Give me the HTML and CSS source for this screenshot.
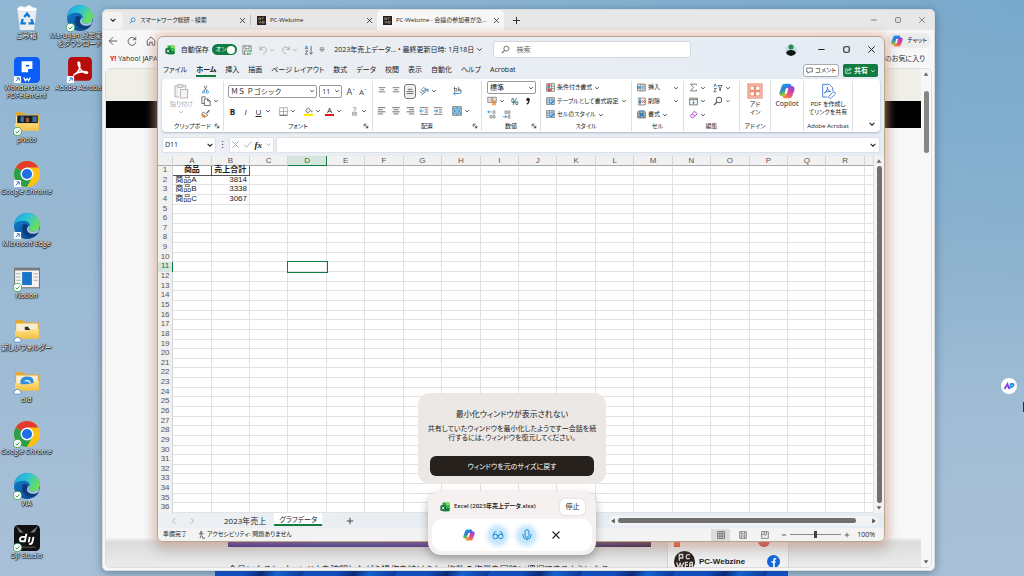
FILE: index.html
```html
<!DOCTYPE html>
<html lang="ja">
<head>
<meta charset="utf-8">
<title>デスクトップ</title>
<link rel="stylesheet" href="styles.css">
</head>
<body>
<svg class="defs" aria-hidden="true">
  <defs>
    <linearGradient id="g-edge-a" x1="0" y1="0" x2="1" y2="0.5"><stop offset="0" stop-color="#1ba3e4"/><stop offset=".5" stop-color="#2fc3d6"/><stop offset="1" stop-color="#6be05a"/></linearGradient>
    <linearGradient id="g-edge-b" x1="0" y1="0" x2="0.6" y2="1"><stop offset="0" stop-color="#1689d8"/><stop offset="1" stop-color="#0b4a93"/></linearGradient>
    <linearGradient id="g-cop-a" x1="0" y1="0" x2="0.4" y2="1"><stop offset="0" stop-color="#16a6e8"/><stop offset=".5" stop-color="#2f7de0"/><stop offset=".75" stop-color="#53b95c"/><stop offset="1" stop-color="#f2c11e"/></linearGradient>
    <linearGradient id="g-cop-b" x1="0.6" y1="0" x2="0.3" y2="1"><stop offset="0" stop-color="#8a48e0"/><stop offset=".5" stop-color="#e0459a"/><stop offset="1" stop-color="#f58a35"/></linearGradient>
    <linearGradient id="g-folder" x1="0" y1="0" x2="0" y2="1"><stop offset="0" stop-color="#ffe08a"/><stop offset="1" stop-color="#f5c142"/></linearGradient>
  </defs>
  <symbol id="down" viewBox="0 0 10 10"><path d="M2 3.5l3 3 3-3" fill="none" stroke="currentColor" stroke-width="1.3"/></symbol>
  <symbol id="left" viewBox="0 0 10 10"><path d="M6.5 1.5L3 5l3.500 3.500" fill="none" stroke="currentColor"/></symbol>
  <symbol id="right" viewBox="0 0 10 10"><path d="M3.500 1.500L7 5 3.500 8.500" fill="none" stroke="currentColor"/></symbol>
  <symbol id="x" viewBox="0 0 10 10"><path d="M1.500 1.500l7 7m0-7l-7 7" fill="none" stroke="currentColor" stroke-width="1.100"/></symbol>
  <symbol id="plus" viewBox="0 0 10 10"><path d="M5 1v8M1 5h8" fill="none" stroke="currentColor"/></symbol>
  <symbol id="minus" viewBox="0 0 10 10"><path d="M1.500 5h7" fill="none" stroke="currentColor" stroke-width="1.200"/></symbol>
  <symbol id="box" viewBox="0 0 10 10"><rect x="2" y="2" width="6" height="6" rx="1" fill="none" stroke="currentColor" stroke-width="1.200"/></symbol>
  <symbol id="launch" viewBox="0 0 10 10"><path d="M2 6V2h4M4 4l4 4M8 4.500V8H4.500" fill="none" stroke="currentColor" stroke-width="1.200"/></symbol>
  <symbol id="lens" viewBox="0 0 10 10"><circle cx="6" cy="4" r="2.800" fill="none" stroke="currentColor" stroke-width="1"/><path d="M4 6L1 9" stroke="currentColor" stroke-width="1.200"/></symbol>
  <symbol id="tri-up" viewBox="0 0 10 10"><path d="M5 2l4 6H1z" fill="currentColor"/></symbol>
  <symbol id="tri-down" viewBox="0 0 10 10"><path d="M5 8l4-6H1z" fill="currentColor"/></symbol>
  <symbol id="tri-left" viewBox="0 0 10 10"><path d="M2 5l6-4v8z" fill="currentColor"/></symbol>
  <symbol id="tri-right" viewBox="0 0 10 10"><path d="M8 5L2 1v8z" fill="currentColor"/></symbol>
  <symbol id="edge" viewBox="0 0 24 24"><circle cx="12" cy="12" r="12" fill="url(#g-edge-b)"/><path d="M.3 10.500C1.500 3.500 7 0 12.500 0 19 0 24 5 24 10.500c0 4-3 6.500-6.500 6.500-2.500 0-4-1-4-2 0-.7 1.200-1.300 1.200-3.200 0-2.300-2.200-4.600-6-4.600-3.700 0-6.700 1-8.400 3.300z" fill="url(#g-edge-a)"/><path d="M8 11c-2 6 2 11 8 11 3 0 5.500-1.500 7-4-4 2.500-9.500 1.500-10.500-2.500-.5-2 .5-3 .5-3.500C12 10 9 9.500 8 11z" fill="#0d3c7d"/><path d="M14.700 11.500c0 2-1.200 2.600-1.200 3.500 0 1 1.500 2 4 2 2.600 0 5-1.300 6-3.500-.2 1.700-.6 3.200-1.500 4.500-3 2.200-9.500 1.500-10-2.500 0-2 1-3.500 2.700-4z" fill="#a8c6de"/></symbol>
  <symbol id="chrome" viewBox="0 0 24 24"><circle cx="12" cy="12" r="12" fill="#fbc116"/><path d="M12 12L1.600 6A12 12 0 0 1 22.400 6z" fill="#e33b2e"/><path d="M12 12L1.600 6A12 12 0 0 0 12 24l5-9z" fill="#2b9e48"/><path d="M12 6h10.400A12 12 0 0 1 12 24l5.200-9z" fill="#fbc116"/><circle cx="12" cy="12" r="6" fill="#fff"/><circle cx="12" cy="12" r="4.700" fill="#1f6fe5"/></symbol>
  <symbol id="folder" viewBox="0 0 24 24"><path d="M1 4q0-1 1-1h6l2 2h12q1 0 1 1v13H1z" fill="#e9a825"/><rect x="2" y="6" width="20" height="9" fill="#f6edd2"/><path d="M1 13h10l2-2h10v8q0 1-1 1H2q-1 0-1-1z" fill="url(#g-folder)"/></symbol>
  <symbol id="sync" viewBox="0 0 10 10"><circle cx="5" cy="5" r="4.500" fill="#fff" stroke="#35a04a" stroke-width=".9"/><path d="M2.800 5.200l1.600 1.500L7.300 3.600" fill="none" stroke="#2a9440" stroke-width="1.100"/></symbol>
  <symbol id="short" viewBox="0 0 10 10"><rect x="1" y="1" width="8" height="8" rx="1" fill="#fff"/><path d="M3 7l3.500-3.500M4 3.200h3v3" fill="none" stroke="#1668c4"/></symbol>
  <symbol id="cloud" viewBox="0 0 12 10"><path d="M3 8.500a2.300 2.300 0 0 1 0-4.500 3.200 3.200 0 0 1 6 0 2.300 2.300 0 0 1 .2 4.500z" fill="#fff" stroke="#2a7fc4"/></symbol>
  <symbol id="copilot" viewBox="0 0 24 24"><path d="M9 1h6.500c2 0 2.600 1.400 3.200 3l.6 2h-3.500c-1.700 0-2.300 1.200-2.700 2.600L11 16c-.7 2.400-1.500 3.500-4 3.500H4.500C1 19.500 0 17 1 13.500L4 5c1-3 2.500-4 5-4z" fill="url(#g-cop-a)"/><path d="M15 23H8.500c-2 0-2.600-1.400-3.200-3l-.3-1h3.200c1.700 0 2.300-1.200 2.700-2.600L13 8.500C13.700 6.100 14.500 5 17 5h2.500c3.500 0 4.500 2.500 3.500 6l-3 8c-1 3-2.500 4-5 4z" fill="url(#g-cop-b)"/><path d="M10.500 8H14l-2.200 8H8.500z" fill="#fff"/></symbol>
  <symbol id="excel" viewBox="0 0 24 24"><rect x="6" y="1" width="17" height="21" rx="2" fill="#27a844"/><path d="M14 1h7q2 0 2 2v5h-9z" fill="#8edb57"/><path d="M14 8h9v7h-9z" fill="#35bd4b"/><path d="M6 15h17v5q0 2-2 2H8q-2 0-2-2z" fill="#138038"/><rect x="1" y="8" width="13" height="13" rx="2" fill="#0b6a3a"/><path d="M4.500 11l6 7m0-7l-6 7" stroke="#fff" stroke-width="2"/></symbol>
  <symbol id="site" viewBox="0 0 10 10"><rect width="10" height="10" fill="#26201d"/><path d="M2 4V2h2v2H2m4 0V2h2M2 6l1 2 1-2 1 2M6 6h2v2H6z" fill="none" stroke="#b9aca0" stroke-width=".7"/></symbol>
  <symbol id="lines" viewBox="0 0 12 12"><path d="M2 2h8M3.500 4.500h5M2 7h8" fill="none" stroke="#666"/></symbol>
  <symbol id="lines-b" viewBox="0 0 12 12"><path d="M3.500 4h5M2 6.500h8M2 9h8" fill="none" stroke="#555"/></symbol>
  <symbol id="al-l" viewBox="0 0 12 12"><path d="M1 2h9M1 4.500h6M1 7h9M1 9.500h6" fill="none" stroke="#555"/></symbol>
  <symbol id="al-c" viewBox="0 0 12 12"><path d="M1.500 2h9M3 4.500h6M1.500 7h9M3 9.500h6" fill="none" stroke="#555"/></symbol>
  <symbol id="al-r" viewBox="0 0 12 12"><path d="M2 2h9M5 4.500h6M2 7h9M5 9.500h6" fill="none" stroke="#555"/></symbol>
  <symbol id="ind" viewBox="0 0 12 12"><path d="M1 2h10M7 4.700h4M7 7.300h4M1 10h10" fill="none" stroke="#666"/><path d="M5.500 6H1m2-2L1 6l2 2" fill="none" stroke="#1780c9"/></symbol>
  <symbol id="ind2" viewBox="0 0 12 12"><path d="M1 2h10M7 4.700h4M7 7.300h4M1 10h10" fill="none" stroke="#666"/><path d="M1 6h4.500m-2-2l2 2-2 2" fill="none" stroke="#1780c9"/></symbol>
  <symbol id="orient" viewBox="0 0 12 12"><path d="M1 7l3 2M2 4l4 3M4 3a2 2 0 1 1 1 3" fill="none" stroke="#555"/><path d="M3 11l8-7M8 4h3v3" fill="none" stroke="#1780c9"/></symbol>
  <symbol id="wrap" viewBox="0 0 12 12"><path d="M2 3h4v3H3V1M8 1v5h2V4H8" fill="none" stroke="#666"/><path d="M2 9h7q2 0 2-2V5M4 7L2 9l2 2" fill="none" stroke="#1780c9"/></symbol>
  <symbol id="merge" viewBox="0 0 12 12"><rect x="1" y="1" width="10" height="10" fill="#cfe5f6" stroke="#555"/><path d="M1 3.500h10M1 8.500h10M6 1v2m0 6v2M2.500 6h7M4 4.700L2.500 6 4 7.300M8 4.700L9.500 6 8 7.300" fill="none" stroke="#1780c9"/></symbol>
  <symbol id="money" viewBox="0 0 12 12"><rect x="1" y="1.500" width="10" height="6" fill="#f5eee5" stroke="#777"/><circle cx="6" cy="4.500" r="1.500" fill="none" stroke="#777"/><path d="M6 6.500h5M6 8.500h5M6 10.500h5" stroke="#ec8b31" stroke-width="1.400"/></symbol>
  <symbol id="dec" viewBox="0 0 12 12"><path d="M6 2.500H1m2-1.800l-2 1.800 2 1.800" fill="none" stroke="#1780c9"/><rect x="8" y="1" width="2.500" height="4" rx="1" fill="none" stroke="#666"/><rect x="4" y="7" width="2.500" height="4" rx="1" fill="none" stroke="#666"/><rect x="8" y="7" width="2.500" height="4" rx="1" fill="none" stroke="#666"/></symbol>
  <symbol id="inc" viewBox="0 0 12 12"><path d="M1 9h5M4 7.200L6 9l-2 1.800" fill="none" stroke="#1780c9"/><rect x="4" y="1" width="2.500" height="4" rx="1" fill="none" stroke="#666"/><rect x="8" y="1" width="2.500" height="4" rx="1" fill="none" stroke="#666"/><rect x="8" y="7" width="2.500" height="4" rx="1" fill="none" stroke="#666"/></symbol>
  <symbol id="cond" viewBox="0 0 12 12"><rect x="1" y="1" width="10" height="10" fill="#fff" stroke="#666"/><path d="M1 4.500h10M1 7.500h10M7.500 1v10" stroke="#777" fill="none"/><path d="M2 1.500h4v2.500H2zM2 8h5v2.500H2z" fill="#e0443e"/><path d="M2 5h3v2H2z" fill="#2a82cc"/></symbol>
  <symbol id="tbl" viewBox="0 0 12 12"><rect x="1" y="1" width="10" height="9" fill="#cfe5f6" stroke="#666"/><path d="M1 4h10M1 7h10M4.500 1v9M8 1v9" stroke="#5b87a8" fill="none"/><path d="M11 3L6 8l-3 3 4-1 5-5z" fill="#1780c9" stroke="#fff" stroke-width=".5"/></symbol>
  <symbol id="cell-i" viewBox="0 0 12 12"><rect x="1" y="1.500" width="10" height="9" fill="#fff" stroke="#666"/><path d="M1 4.500h10M1 7.500h10M4.500 1v10M8 1v10" stroke="#777"/><path d="M4 4.500h7v3H4z" fill="#8ec5ec"/><path d="M5 6H0m2-2L0 6l2 2" stroke="#1780c9" fill="none"/></symbol>
  <symbol id="cell-d" viewBox="0 0 12 12"><path d="M1 1.500h10v9H1M1 4h4M1 8h4M4 1.500V4m0 4v2.500" stroke="#666" fill="none"/><path d="M2 4.500h4v3H2z" fill="#1780c9"/><path d="M7 4l4 4m0-4L7 8" stroke="#e0443e" stroke-width="1.300"/></symbol>
  <symbol id="cell-f" viewBox="0 0 12 12"><rect x="1" y="2.500" width="10" height="8" fill="#cfe5f6" stroke="#555"/><path d="M1 5h10M1 8h10M4 2v9M8 2v9" stroke="#555"/><path d="M4 5h4v3H4z" fill="#1780c9"/><path d="M2 1h8" stroke="#1780c9"/></symbol>
  <symbol id="sort" viewBox="0 0 12 12"><path d="M1.500 5L3 1l1.500 4M2 4h2" fill="none" stroke="#1780c9"/><path d="M1.500 7h3l-3 4h3M8.500 1v10M6.500 9l2 2 2-2" fill="none" stroke="#555"/></symbol>
  <symbol id="filter" viewBox="0 0 12 12"><path d="M1 4.500L2.500 1 4 4.500" fill="none" stroke="#1780c9"/><path d="M1 6.500h3l-3 4h3M6 3h5L9 6v3H8V6z" fill="none" stroke="#555"/></symbol>
  <symbol id="sum" viewBox="0 0 12 12"><path d="M10 3V1.500H2L6 6l-4 4.500h8V9" fill="none" stroke="#555"/></symbol>
  <symbol id="fill" viewBox="0 0 12 12"><rect x="1" y="1.500" width="10" height="9" fill="none" stroke="#555"/><path d="M1 3.500h10" stroke="#555"/><path d="M6 4.500V9M4 7l2 2 2-2" fill="none" stroke="#1780c9"/></symbol>
  <symbol id="erase" viewBox="0 0 12 12"><path d="M7 1.500L11 5l-5.500 5.500H4L1.500 8zM4 5l4 3.500" fill="#f6e7fa" stroke="#a33bc0"/></symbol>
  <symbol id="undo" viewBox="0 0 12 12"><path d="M2 1.500V5.500h4M2 5.500C5 1 10 2 10 6c0 2-2 3.500-4 5" fill="none" stroke="currentColor"/></symbol>
  <symbol id="redo" viewBox="0 0 12 12"><path d="M10 1.500V5.500H6M10 5.500C7 1 2 2 2 6c0 2 2 3.500 4 5" fill="none" stroke="currentColor"/></symbol>
  <symbol id="save" viewBox="0 0 12 12"><path d="M1 1h10v5M1 1v10h4M3.500 1v3.500h5V1M3 11V7h3" fill="none" stroke="#777"/><path d="M6.500 8.500a2.300 2.300 0 0 1 4-1M11 6v2H9M11 9.500a2.300 2.300 0 0 1-4 1M6.500 12v-2h2" fill="none" stroke="#29a04e"/></symbol>
  <symbol id="cut" viewBox="0 0 12 12"><path d="M4 1l4 7M8 1L4 8" stroke="#555" fill="none"/><circle cx="3.500" cy="9.500" r="1.500" fill="none" stroke="#1780c9"/><circle cx="8.500" cy="9.500" r="1.500" fill="none" stroke="#1780c9"/></symbol>
  <symbol id="copy" viewBox="0 0 12 12"><path d="M4 9H1V1h4l1 1M4 3.500h4l3 2.500v5.500H4zM8 3.500V6h3" fill="none" stroke="#555"/></symbol>
  <symbol id="brush" viewBox="0 0 12 12"><path d="M7 5l3.500-4L12 2 8.500 6z" fill="#666"/><path d="M3 4l6 4-2 2-6-3z" fill="#fff" stroke="#555"/><path d="M1 7l6 3-2 2-4-2z" fill="#ef8a2b"/></symbol>
  <symbol id="paste" viewBox="0 0 24 24"><path d="M9 21H3V4h4M15 4h4v5M7 2.500h8v4H7z" fill="#eee" stroke="#aaa" stroke-width="1.300"/><rect x="11" y="10" width="11" height="12.500" fill="#f5f5f5" stroke="#aaa" stroke-width="1.300"/></symbol>
  <symbol id="grid" viewBox="0 0 12 12"><rect x="1" y="1" width="10" height="10" fill="none" stroke="#555"/><path d="M1 4.300h10M1 7.700h10M4.300 1v10M7.700 1v10" stroke="#555"/></symbol>
  <symbol id="borders" viewBox="0 0 12 12"><rect x="1" y="1" width="10" height="10" fill="none" stroke="#999"/><path d="M1 6h10M6 1v10" stroke="#999"/><path d="M1 11h10" stroke="#444"/></symbol>
  <symbol id="addin" viewBox="0 0 24 24"><rect x="1.500" y="1.500" width="21" height="21" fill="#fbe6df" stroke="#e4785c" stroke-width="1.500"/><g fill="#fff" stroke="#e4785c" stroke-width="1.500"><rect x="4.500" y="4.500" width="6.500" height="6.500"/><rect x="13" y="4.500" width="6.500" height="6.500"/><rect x="4.500" y="13" width="6.500" height="6.500"/><rect x="13" y="13" width="6.500" height="6.500"/></g></symbol>
  <symbol id="pdf" viewBox="0 0 24 24"><path d="M11 21H4V2h10l5 5v5M6.500 15c4-3 5-6 4.500-9 0 4 2 6 5 7-3-1-6 0-9.500 2z" fill="none" stroke="#5282da" stroke-width="1.500"/><path d="M13 20l6-6q2-1.500 3.500 0t0 3l-5 5q-2 1.500-3.500.5t-1-2.500z" fill="none" stroke="#5282da" stroke-width="1.500"/></symbol>
</svg>

<main class="desktop">
  <div class="bloom"></div>
  <nav class="shortcuts" aria-label="デスクトップのアイコン">
    <a class="shortcut" href="#"><svg class="pic" viewBox="0 0 24 24"><path d="M3 3l18 0-2.500 20H5.500z" fill="#e9eef2"/><path d="M3 3l3-2 4 1 4-2 3 2 4 1-1 3H4z" fill="#fff" stroke="#ccd5db" stroke-width=".6"/><g fill="none" stroke="#1479d4" stroke-width="2.200"><path d="M9.500 11l2.500-3 2.500 3"/><path d="M8 13l-1 4h4"/><path d="M16 13l1.500 4h-4"/></g></svg><span>ごみ箱</span></a>
    <a class="shortcut" href="#"><svg class="pic" viewBox="0 0 24 24"><rect width="24" height="24" rx="4" fill="#0b5df5"/><path d="M7 4h10v7h-4v3H7z" fill="#fff"/><path d="M11 8h3" stroke="#0b5df5" stroke-width="1.500"/><path d="M9 19l1.500 3 1.500-2 1.500 2L15 19" fill="none" stroke="#fff" stroke-width="1.200"/></svg><svg class="mark"><use href="#short"/></svg><span>Wondershare PDFelement</span></a>
    <a class="shortcut" href="#"><svg class="pic" viewBox="0 0 24 24"><use href="#folder" width="24" height="24"/><rect x="3" y="6" width="19" height="7" fill="#14202c"/><path d="M6 7h3v5H6zM17 7h4v5h-4z" fill="#41719a"/><path d="M11 8h3v4h-3z" fill="#a3572f"/></svg><svg class="mark"><use href="#sync"/></svg><span>photo</span></a>
    <a class="shortcut" href="#"><svg class="pic"><use href="#chrome"/></svg><svg class="mark"><use href="#short"/></svg><span>Google Chrome</span></a>
    <a class="shortcut" href="#"><svg class="pic"><use href="#edge"/></svg><svg class="mark"><use href="#short"/></svg><span>Microsoft Edge</span></a>
    <a class="shortcut" href="#"><svg class="pic" viewBox="0 0 24 24"><rect x=".5" y="3" width="23" height="18" fill="#f4f4f4" stroke="#777"/><path d="M.5 4h23" stroke="#777" stroke-width="2"/><rect x="7.500" y="6.500" width="9" height="12" fill="#1a75c6"/><path d="M2 8h4M2 11h4M2 14h4M18 8h4M18 11h4M18 14h4" stroke="#aaa"/></svg><svg class="mark"><use href="#sync"/></svg><span>Notion</span></a>
    <a class="shortcut" href="#"><svg class="pic" viewBox="0 0 24 24"><use href="#folder" width="24" height="24"/><path d="M10 9h3l2 3h-5z" fill="#333"/></svg><svg class="mark"><use href="#cloud"/></svg><span>新しいフォルダー</span></a>
    <a class="shortcut" href="#"><svg class="pic" viewBox="0 0 24 24"><use href="#folder" width="24" height="24"/><path d="M6 14V11q1-4 6-4 6 0 6 4v2l-7 1z" fill="#2f8ede"/><path d="M10 11q4-1 5 2" fill="none" stroke="#fff"/></svg><svg class="mark"><use href="#cloud"/></svg><span>old</span></a>
    <a class="shortcut" href="#"><svg class="pic"><use href="#chrome"/></svg><svg class="mark"><use href="#sync"/></svg><span>Google Chrome</span></a>
    <a class="shortcut" href="#"><svg class="pic"><use href="#edge"/></svg><svg class="mark"><use href="#sync"/></svg><span>VIA</span></a>
    <a class="shortcut" href="#"><svg class="pic" viewBox="0 0 24 24"><rect width="24" height="24" rx="4" fill="#111"/><path d="M2 1l7 6H5zM22 1l-7 6h4z" fill="#777"/><path d="M11.500 8l-1.500 7H7q-2 0-1.500-2T8 11h3M14.500 11l-1 5M18 11l-1 4.500q-.5 2.500-3 2" fill="none" stroke="#fff" stroke-width="1.700"/><path d="M4 20.500h16" stroke="#555"/></svg><svg class="mark"><use href="#sync"/></svg><span>DJI Studio</span></a>
    <a class="shortcut" href="#"><svg class="pic"><use href="#edge"/></svg><svg class="mark"><use href="#sync"/></svg><span>Maru-Jan 設定変更<br>をダウンロード</span></a>
    <a class="shortcut" href="#"><svg class="pic" viewBox="0 0 24 24"><rect x="1" width="22" height="22" rx="4" fill="#b80d0b"/><path d="M6 17c5-3 7-7 5.500-12-1.500-1-2 1 0 5 2 3 4 5 7 5 1.500-1-.5-2-4-1.500-4 .5-7 1.500-8.500 3.500z" fill="none" stroke="#fff" stroke-width="1.400"/></svg><svg class="mark"><use href="#short"/></svg><span>Adobe Acrobat</span></a>
  </nav>

  <section class="browser" aria-label="ブラウザー">
    <header class="tabstrip">
      <button class="tabmenu" aria-label="タブ操作"><svg class="i8"><use href="#down"/></svg></button>
      <div class="btab"><svg class="i7 blue"><use href="#lens"/></svg><span>スマートワーク総研 - 検索</span><button aria-label="閉じる"><svg class="i7"><use href="#x"/></svg></button></div>
      <div class="btab line"><svg class="i9"><use href="#site"/></svg><span>PC-Webzine</span><button aria-label="閉じる"><svg class="i7"><use href="#x"/></svg></button></div>
      <div class="btab current"><svg class="i9"><use href="#site"/></svg><span>PC-Webzine - 会議の参加者が急き…</span><button aria-label="閉じる"><svg class="i7"><use href="#x"/></svg></button></div>
      <button class="newtab" aria-label="新しいタブ"><svg class="i9"><use href="#plus"/></svg></button>
      <div class="winctl faint"><button aria-label="最小化"><svg class="i8"><use href="#minus"/></svg></button><button aria-label="最大化"><svg class="i8"><use href="#box"/></svg></button><button aria-label="閉じる"><svg class="i8"><use href="#x"/></svg></button></div>
    </header>
    <div class="bbar">
      <button aria-label="戻る"><svg class="i10" viewBox="0 0 12 12"><path d="M11 6H1.500M6 1.500L1.500 6 6 10.500" fill="none" stroke="#444"/></svg></button>
      <button aria-label="更新"><svg class="i10" viewBox="0 0 12 12"><path d="M10 4A4.700 4.700 0 1 0 10.700 7M10.500 1v3.500H7" fill="none" stroke="#444"/></svg></button>
      <button aria-label="ホーム"><svg class="i10" viewBox="0 0 12 12"><path d="M1.500 5.500L6 1l4.500 4.500V11h-3V7.500h-3V11h-3z" fill="none" stroke="#444"/></svg></button>
      <button class="chat"><svg class="i12"><use href="#copilot"/></svg>チャット</button>
    </div>
    <div class="favs"><a href="#"><b>Y!</b> Yahoo! JAPAN</a><a href="#">その他のお気に入り</a></div>
    <div class="viewport">
      <div class="webpage">
        <div class="banner"></div><div class="blackbar"></div>
        <div class="article">
          <div class="story"><div class="hero"></div><p>会員になると、ウィンドウを確認しながら操作を続けられ、複数の作業を同時に把握できるようになり、</p></div>
          <aside class="social"><div class="strip"><i></i><i></i></div><div class="who"><svg class="logo" viewBox="0 0 24 24"><circle cx="12" cy="12" r="12" fill="#2a2220"/><path d="M6 11V4h4v4H6m12-3.500q-4-1.500-4 2t4 2M3 13l2 6 2-5 2 5 2-6m5 0h-3v6h3m-3-3h3m2-3v6h3v-3h-3m0-3h3v3" fill="none" stroke="#ddd5d0" stroke-width="1.500"/></svg><strong>PC-Webzine</strong><svg class="fb" viewBox="0 0 24 24"><circle cx="12" cy="12" r="12" fill="#1267dc"/><path d="M17 7h-2.500q-1.700 0-1.700 2v14M8 13h8" fill="none" stroke="#fff" stroke-width="3"/></svg></div></aside>
        </div>
      </div>
      <div class="vbar"><svg class="i6"><use href="#tri-up"/></svg><span class="track"><span class="thumb short"></span></span><svg class="i6"><use href="#tri-down"/></svg></div>
    </div>
  </section>

  <section class="excel" aria-label="Excel">
    <header class="title">
      <div class="quick"><svg class="i10"><use href="#excel"/></svg><label class="auto">自動保存 <input type="checkbox" checked><span class="switch">オン<i></i></span></label>
        <button aria-label="保存"><svg class="i10"><use href="#save"/></svg></button>
        <button class="dim" aria-label="元に戻す"><svg class="i10"><use href="#undo"/></svg><svg class="i6"><use href="#down"/></svg></button>
        <button class="dim" aria-label="やり直し"><svg class="i10"><use href="#redo"/></svg><svg class="i6"><use href="#down"/></svg></button>
        <button aria-label="並べ替え"><svg class="i10"><use href="#sort"/></svg></button>
        <button aria-label="カスタマイズ"><svg class="i6" viewBox="0 0 10 10"><path d="M1 1.500h8M1.500 4h7L5 8z" fill="none" stroke="#444"/></svg></button></div>
      <button class="doc">2023年売上データ… • 最終更新日時: 1月18日<svg class="i7"><use href="#down"/></svg></button>
      <label class="search"><svg class="i9"><use href="#lens"/></svg><input type="search" placeholder="検索" aria-label="検索"></label>
      <div class="winctl"><svg class="avatar" viewBox="0 0 12 12"><circle cx="6" cy="6" r="6" fill="#c4dfee"/><circle cx="6" cy="3" r="2.500" fill="#2f8a4e"/><path d="M1 9q1-3 5-3t5 3q-2 3-5 3T1 9z" fill="#0a1410"/></svg><button aria-label="最小化"><svg class="i9"><use href="#minus"/></svg></button><button aria-label="最大化"><svg class="i9"><use href="#box"/></svg></button><button aria-label="閉じる"><svg class="i9"><use href="#x"/></svg></button></div>
    </header>
    <nav class="menu"><button>ファイル</button><button class="on">ホーム</button><button>挿入</button><button>描画</button><button>ページ レイアウト</button><button>数式</button><button>データ</button><button>校閲</button><button>表示</button><button>自動化</button><button>ヘルプ</button><button>Acrobat</button>
      <span class="push"></span><button class="comment"><svg class="i7" viewBox="0 0 10 10"><path d="M1 1.500h8v5.500H5L3 9V7H1z" fill="none" stroke="#444"/></svg>コメント</button><button class="share"><svg class="i7" viewBox="0 0 10 10"><path d="M4 3H1v6h7V7M3.500 6.500q0-3.500 4-3.500M6 1l3 2-3 2.500" fill="none" stroke="#fff"/></svg>共有<svg class="i6"><use href="#down"/></svg></button></nav>
    <div class="ribbon">
      <div class="group"><div class="body clip"><button class="big dim small-text"><svg class="i16"><use href="#paste"/></svg>貼り付け<svg class="i6"><use href="#down"/></svg></button><div class="stack"><button aria-label="切り取り"><svg class="i9"><use href="#cut"/></svg></button><button aria-label="コピー"><svg class="i10"><use href="#copy"/></svg><svg class="i6"><use href="#down"/></svg></button><button aria-label="書式のコピー"><svg class="i9"><use href="#brush"/></svg></button></div></div><div class="cap">クリップボード<svg class="i6"><use href="#launch"/></svg></div></div>
      <div class="group"><div class="body two"><div class="row"><span class="pick wide"><select aria-label="フォント"><option>ＭＳ Ｐゴシック</option></select><svg class="i6"><use href="#down"/></svg></span><span class="pick size"><select aria-label="サイズ"><option>11</option></select><svg class="i6"><use href="#down"/></svg></span><button class="letter">A<sup>ˆ</sup></button><button class="letter small">A<sup>ˇ</sup></button></div>
        <div class="row spread"><button><b>B</b></button><button><em>I</em></button><button><u>U</u><svg class="i6"><use href="#down"/></svg></button><i class="sep"></i><button aria-label="罫線"><svg class="i9"><use href="#borders"/></svg><svg class="i6"><use href="#down"/></svg></button><i class="sep"></i><button aria-label="塗りつぶし"><svg class="i9" viewBox="0 0 12 12"><path d="M2 5l4-4 3 3.500-4 3.500z" fill="#eee" stroke="#555"/><path d="M10 5l1 2" stroke="#1780c9" stroke-width="1.500"/><path d="M0 10.500h12" stroke="#ffe900" stroke-width="3"/></svg><svg class="i6"><use href="#down"/></svg></button><button><span class="ink">A</span><svg class="i6"><use href="#down"/></svg></button><i class="sep"></i><button aria-label="ふりがな"><svg class="i9" viewBox="0 0 12 12"><path d="M4 1h4q0 3-3 4M3.500 7h5v4h-5zM3.500 9h5" fill="none" stroke="#888"/></svg><svg class="i6"><use href="#down"/></svg></button></div></div><div class="cap">フォント<svg class="i6"><use href="#launch"/></svg></div></div>
      <div class="group"><div class="body two align"><div class="row"><button aria-label="上揃え"><svg class="i10"><use href="#lines"/></svg></button><button aria-label="中央揃え"><svg class="i10"><use href="#lines"/></svg></button><button class="sel" aria-label="下揃え"><svg class="i10"><use href="#lines-b"/></svg></button><button aria-label="方向"><svg class="i10"><use href="#orient"/></svg><svg class="i6"><use href="#down"/></svg></button><span class="push"></span><button class="last" aria-label="折り返し"><svg class="i10"><use href="#wrap"/></svg></button></div><div class="row"><button aria-label="左"><svg class="i10"><use href="#al-l"/></svg></button><button aria-label="中央"><svg class="i10"><use href="#al-c"/></svg></button><button aria-label="右"><svg class="i10"><use href="#al-r"/></svg></button><button aria-label="字下げ解除"><svg class="i10"><use href="#ind"/></svg></button><button aria-label="字下げ"><svg class="i10"><use href="#ind2"/></svg></button><span class="push"></span><button class="last" aria-label="結合"><svg class="i10"><use href="#merge"/></svg><svg class="i6"><use href="#down"/></svg></button></div></div><div class="cap">配置<svg class="i6"><use href="#launch"/></svg></div></div>
      <div class="group"><div class="body stack"><span class="pick"><select aria-label="表示形式"><option>標準</option></select><svg class="i6"><use href="#down"/></svg></span><div class="row num"><button aria-label="通貨"><svg class="i10"><use href="#money"/></svg><svg class="i6"><use href="#down"/></svg></button><button class="pct">%</button><button aria-label="桁区切り"><svg class="i8" viewBox="0 0 10 10"><path d="M6.500 3q0 4-3 6" fill="none" stroke="#222" stroke-width="1.500"/><circle cx="5" cy="3" r="2.200" fill="#222"/></svg></button></div><div class="row num"><button aria-label="桁を増やす"><svg class="i9"><use href="#dec"/></svg></button><button aria-label="桁を減らす"><svg class="i9"><use href="#inc"/></svg></button></div></div><div class="cap">数値<svg class="i6"><use href="#launch"/></svg></div></div>
      <div class="group"><div class="body stack small-text"><button><svg class="i9"><use href="#cond"/></svg>条件付き書式<svg class="i6"><use href="#down"/></svg></button><button><svg class="i9"><use href="#tbl"/></svg>テーブルとして書式設定<svg class="i6"><use href="#down"/></svg></button><button><svg class="i9"><use href="#tbl"/></svg>セルのスタイル<svg class="i6"><use href="#down"/></svg></button></div><div class="cap">スタイル</div></div>
      <div class="group"><div class="body stack cells small-text"><button><svg class="i9"><use href="#cell-i"/></svg>挿入<svg class="i6"><use href="#down"/></svg></button><button><svg class="i9"><use href="#cell-d"/></svg>削除<svg class="i6"><use href="#down"/></svg></button><button class="tight"><svg class="i9"><use href="#cell-f"/></svg>書式<svg class="i6"><use href="#down"/></svg></button></div><div class="cap">セル</div></div>
      <div class="group"><div class="body stack edit"><div class="row"><button aria-label="合計"><svg class="i9"><use href="#sum"/></svg><svg class="i6"><use href="#down"/></svg></button><button aria-label="並べ替えとフィルター"><svg class="i10"><use href="#filter"/></svg><svg class="i6"><use href="#down"/></svg></button></div><div class="row"><button aria-label="フィル"><svg class="i9"><use href="#fill"/></svg><svg class="i6"><use href="#down"/></svg></button><button class="grey" aria-label="検索と選択"><svg class="i10"><use href="#lens"/></svg><svg class="i6"><use href="#down"/></svg></button></div><div class="row"><button aria-label="クリア"><svg class="i9"><use href="#erase"/></svg><svg class="i6"><use href="#down"/></svg></button></div></div><div class="cap">編集</div></div>
      <div class="group"><div class="body"><button class="big small-text"><svg class="i16"><use href="#addin"/></svg>アド<br>イン</button></div><div class="cap">アドイン</div></div>
      <div class="group"><div class="body"><button class="big"><svg class="i16"><use href="#copilot"/></svg>Copilot</button></div></div>
      <div class="group"><div class="body"><button class="big small-text"><svg class="i16"><use href="#pdf"/></svg>PDF を作成し<br>てリンクを共有</button></div><div class="cap">Adobe Acrobat</div></div>
      <div class="fold"><button aria-label="リボンを折りたたむ"><svg class="i8"><use href="#down"/></svg></button></div>
    </div>
    <div class="formula">
      <span class="pick name"><select aria-label="名前ボックス"><option>D11</option></select><svg class="i8"><use href="#down"/></svg></span><span class="dots">⋮</span>
      <div class="fx"><svg class="i9"><use href="#x"/></svg><svg class="i9" viewBox="0 0 10 10"><path d="M1 5.500L4 8l5.500-6.500" fill="none" stroke="currentColor"/></svg><em>fx</em><svg class="i7"><use href="#down"/></svg></div>
      <label class="entry"><input type="text" aria-label="数式バー"><svg class="i8"><use href="#down"/></svg></label>
    </div>
    <div class="work">
      <table class="sheet"><thead></thead><tbody></tbody></table>
      <div class="vbar"><svg class="i6"><use href="#tri-up"/></svg><span class="track"><span class="thumb"></span></span><svg class="i6"><use href="#tri-down"/></svg></div>
    </div>
    <div class="sheets"><button class="dim" aria-label="前へ"><svg class="i8"><use href="#left"/></svg></button><button class="dim" aria-label="次へ"><svg class="i8"><use href="#right"/></svg></button><button class="leaf">2023年売上</button><button class="leaf on">グラフデータ</button><button class="more" aria-label="シートの追加"><svg class="i8"><use href="#plus"/></svg></button>
      <div class="hbar"><svg class="i6"><use href="#tri-left"/></svg><span class="track"><span class="thumb"></span></span><svg class="i6"><use href="#tri-right"/></svg></div></div>
    <footer class="status"><span>準備完了</span><span class="a11y"><svg class="i8" viewBox="0 0 10 10"><circle cx="4" cy="1.500" r="1" fill="none" stroke="#444"/><path d="M1 3.500h6M4 3.500v2L2.500 9M5 6l1 3h3" fill="none" stroke="#444"/></svg>アクセシビリティ: 問題ありません</span><span class="push"></span>
      <button class="view on" aria-label="標準"><svg class="i8"><use href="#grid"/></svg></button><button class="view" aria-label="ページレイアウト"><svg class="i8" viewBox="0 0 12 12"><path d="M1 1h10v10H1zM3.500 1v10M8.500 1v10M5 4h2M5 6h2M5 8h2" fill="none" stroke="#555"/></svg></button><button class="view" aria-label="改ページ"><svg class="i8" viewBox="0 0 12 12"><path d="M1 1h10v10H1zM5 1v4H1M8 1v5H5" fill="none" stroke="#555"/></svg></button>
      <svg class="i6"><use href="#minus"/></svg><input type="range" aria-label="ズーム" value="50"><svg class="i6"><use href="#plus"/></svg><span class="pc">100%</span></footer>
  </section>

  <section class="notice" role="dialog" aria-labelledby="nt"><h1 id="nt">最小化ウィンドウが表示されない</h1><p>共有していたウィンドウを最小化したようですー会話を続<br>行するには、ウィンドウを復元してください。</p><button>ウィンドウを元のサイズに戻す</button></section>
  <section class="voice" aria-label="Copilot 音声">
    <div class="source"><svg class="i10"><use href="#excel"/></svg><span>Excel (2023年売上データ.xlsx)</span><button>停止</button></div>
    <div class="tools"><button aria-label="Copilot"><svg class="i12"><use href="#copilot"/></svg></button><button class="halo" aria-label="画面を見る"><svg class="i12" viewBox="0 0 12 12"><g fill="none" stroke="#178ad6"><circle cx="3.300" cy="7.500" r="2.300"/><circle cx="8.700" cy="7.500" r="2.300"/><path d="M1.200 6.500L2.500 3q1-1 2 0M10.800 6.500L9.500 3q-1-1-2 0M5 6.500q1-1 2 0"/></g></svg></button><button class="halo" aria-label="マイク"><svg class="i12" viewBox="0 0 12 12"><g fill="none" stroke="#178ad6"><rect x="4" y=".7" width="4" height="7.500" rx="2"/><path d="M2 5v1.500q0 3.500 4 3.500t4-3.500V5M6 10v1.500"/></g></svg></button><button aria-label="閉じる"><svg class="i10"><use href="#x"/></svg></button></div>
  </section>
  <button class="floater" aria-label="アシスタント"><svg class="i12" viewBox="0 0 12 12"><path d="M1.500 9l3-5 1.500 5" fill="none" stroke="#8a3ee0" stroke-width="1.800"/><path d="M6.500 9L8 4h1.500q1.500 0 1 1.500T8 7" fill="none" stroke="#1b8fe8" stroke-width="1.800"/></svg></button>
  <i class="edgebar"></i>
</main>
<script src="sheet.js"></script>
</body>
</html>
```
FILE: styles.css
```css
* { box-sizing: border-box; }
body { margin: 0; font-family: "Open Sans", "Noto Sans CJK JP", sans-serif; font-size: 7px; line-height: 9px; color: #222; font-feature-settings: "palt"; }
button, input, select { font: inherit; color: inherit; font-feature-settings: inherit; border: 0; padding: 0; margin: 0; background: none; }
button { display: inline-flex; align-items: center; justify-content: center; gap: 2px; white-space: nowrap; }
a { color: inherit; text-decoration: none; }
svg { flex: none; display: block; }
.defs { position: absolute; width: 0; height: 0; }
.i6 { width: 6px; height: 6px; }
.i7 { width: 7px; height: 7px; }
.i8 { width: 8px; height: 8px; }
.i9 { width: 9px; height: 9px; }
.i10 { width: 10px; height: 10px; }
.i12 { width: 12px; height: 12px; }
.i16 { width: 16px; height: 16px; }
.push { flex: 1; }
.dim { color: #a5a5a5; }
.grey { color: #555; }
.blue { color: #1478cc; }
.small-text { font-size: 6px; }

.desktop { position: relative; height: 100vh; overflow: hidden; background: radial-gradient(ellipse at 100% 0, #78a9cb 0, transparent 50%), linear-gradient(180deg, #90b6d3, #98b8d2 40%, #a9c1d8); }
.bloom { position: absolute; bottom: 0; left: 21%; right: 23%; height: 12px; background: repeating-linear-gradient(115deg, #0a50d8 0 30px, #06207a 46px, #0c6cf0 60px, #0636a8 84px); }
.shortcuts { height: 100%; padding-top: 5px; display: grid; grid-auto-flow: column; grid-template-rows: repeat(11, 52px); grid-auto-columns: 53px; justify-content: start; }
.shortcut { display: grid; grid-template: 27px 1fr / minmax(0, 1fr); justify-items: center; text-align: center; color: #fff; line-height: 8px; text-shadow: 0 0 1px #000, 0 1px 1px #000, 1px 0 1px #000; }
.shortcut .pic { grid-area: 1 / 1; width: 26px; height: 26px; }
.shortcut .mark { grid-area: 1 / 1; width: 9px; height: 9px; align-self: end; justify-self: start; margin-left: 13px; }
.shortcut span { width: 60px; margin: 0 -4px; }

.browser { position: absolute; inset: 9px 89px 5px 102px; display: flex; flex-direction: column; background: #f7f7f7; border: 1px solid #d9dde0; border-radius: 5px; overflow: hidden; box-shadow: 0 2px 10px #2c496688; }
.tabstrip { display: flex; align-items: center; height: 20px; background: #e7e7e7; flex: none; }
.tabmenu { width: 20px; height: 17px; border-radius: 4px; background: #f2f2f2; }
.btab { flex: 0 0 127px; min-width: 0; height: 20px; display: flex; align-items: center; gap: 4px; padding: 0 4px 0 6px; font-size: 6px; }
.btab span { flex: 1; min-width: 0; overflow: hidden; white-space: nowrap; text-overflow: ellipsis; }
.btab.line { border-left: 1px solid #bbb; height: 10px; }
.btab.current { background: #f7f7f7; border-radius: 5px 5px 0 0; }
.newtab { margin-left: 8px; }
.winctl { display: flex; margin-left: auto; align-items: center; justify-content: flex-end; gap: 16px; padding-right: 8px; }
.faint { color: #777; }
.bbar { display: flex; align-items: center; gap: 9px; padding: 0 3px 0 5px; height: 21px; flex: none; }
.chat { margin-left: auto; height: 15px; padding: 0 4px; gap: 4px; border-radius: 8px; background: #ececec; font-size: 6px; }
.favs { height: 17px; flex: none; display: flex; justify-content: space-between; padding: 3px 9px 0 7px; }
.favs b { color: #e5002d; }
.viewport { flex: 1; min-height: 0; margin: 0 2px 2px 2px; display: flex; border: 1px solid #ddd; border-radius: 5px; overflow: hidden; }
.webpage { flex: 1; display: flex; flex-direction: column; min-width: 0; background: linear-gradient(180deg, #f8f8f8 94%, #dcdcdc 95%, #ebebeb); }
.banner { height: 32px; background: #efefe7; flex: none; }
.blackbar { height: 27px; background: #000; flex: none; }
.article { flex: 1; display: flex; align-items: flex-end; gap: 16px; padding: 0 132px 0 122px; }
.story { flex: 1; min-width: 0; height: 40px; overflow: hidden; }
.hero { height: 20px; background: linear-gradient(90deg, #35219c, #27379a 30%, #3a229c 50%, #2c2c86 80%, #2a123c); }
.story p { margin: 17px 0 0; font-size: 9px; line-height: 12px; white-space: nowrap; }
.social { flex: 0 0 122px; height: 40px; padding: 0 6px; background: #f1f1f1; border-left: 1px solid #d5d5d5; border-right: 1px solid #d5d5d5; overflow: hidden; }
.strip { display: flex; justify-content: space-between; height: 20px; padding-right: 12px; }
.strip i { width: 6px; background: #e1582f; }
.strip i + i { width: 12px; border-radius: 0 0 6px 6px; background: #d94141; }
.who { display: flex; align-items: center; gap: 4px; margin-top: 4px; }
.who strong { flex: 1; font-size: 8px; font-family: "Liberation Sans", sans-serif; }
.logo { width: 21px; height: 21px; }
.fb { width: 13px; height: 13px; margin-right: 2px; }
.vbar { width: 10px; flex: none; display: flex; flex-direction: column; align-items: center; gap: 2px; padding: 2px 0; color: #666; }
.track { flex: 1; display: flex; }
.thumb { flex: 1; background: #707070; border-radius: 3px; min-width: 5px; }
.thumb.short { flex: none; height: 62px; margin-top: 12px; width: 5px; background: #858585; }

.excel { position: absolute; inset: 36px 139px 34px 157px; display: flex; flex-direction: column; background: linear-gradient(90deg, #eceff3, #e5ecf4); border: 1px solid #b9a58c; border-radius: 6px; overflow: hidden; box-shadow: 0 0 8px 3px #efa58a77, 0 6px 14px 2px #5554; }
.title { height: 25px; flex: none; display: grid; grid-template-columns: 176fr 159fr 197fr 193fr; align-items: center; }
.quick { display: flex; align-items: center; justify-content: space-between; padding: 0 9px 0 7px; }
.quick button { gap: 1px; }
.auto { display: flex; align-items: center; gap: 3px; }
.auto input { position: absolute; opacity: 0; }
.switch { display: flex; align-items: center; justify-content: space-between; width: 25px; height: 11px; padding: 0 2px 0 4px; border-radius: 6px; background: #107c41; color: #fff; font-size: 6px; }
.switch i { width: 8px; height: 8px; border-radius: 4px; background: #fff; }
.doc { justify-content: flex-start; }
.search { display: flex; align-items: center; gap: 6px; height: 17px; padding: 0 7px; background: #fff; border: 1px solid #d4d8dc; border-radius: 3px; color: #666; }
.search input { flex: 1; min-width: 0; outline: 0; }
.search input::placeholder { color: #666; }
.avatar { width: 12px; height: 12px; margin-right: 4px; }
.menu { display: flex; align-items: center; gap: 9px; height: 17px; flex: none; padding: 0 6px 0 5px; }
.menu button { height: 13px; border-bottom: 2px solid transparent; }
.menu .on { font-weight: 700; border-color: #107c41; }
.menu .comment { border: 1px solid #aaa; border-radius: 3px; background: #fff; padding: 0 2px; margin-right: -5px; font-size: 6px; }
.menu .share { border: 0; border-radius: 2px; background: #107c41; color: #fff; padding: 0 2px; font-weight: 700; }
.ribbon { height: 53px; flex: none; margin: 0 4px; display: grid; grid-template-columns: 62fr 149fr 109fr 59fr 91fr 52fr 56fr 31fr 33fr 49fr 27fr; background: #fff; border-radius: 4px; box-shadow: 0 1px 2px #8899aa99; }
.group { display: flex; flex-direction: column; min-width: 0; margin: 2px 0 1px; border-right: 1px solid #e0e0e0; }
.body { height: 40px; display: flex; justify-content: center; }
.cap { display: grid; grid-template-columns: 1fr auto 1fr; align-items: center; height: 10px; white-space: nowrap; font-size: 6px; }
.cap::before { content: ""; }
.cap svg { justify-self: end; margin-right: 3px; }
.big { flex-direction: column; justify-content: flex-start; gap: 1px; padding-top: 2px; line-height: 8px; }
.clip { justify-content: space-around; padding-left: 4px; }
.stack { flex-direction: column; display: flex; justify-content: space-between; align-items: flex-start; padding: 0 4px 0 5px; }
.body > .stack { padding: 2px 0; }
.stack > button, .stack > .row { height: 13px; }
.row { display: flex; align-items: center; gap: 4px; }
.two { flex-direction: column; justify-content: space-around; padding: 0 5px 0 4px; }
.two .row { height: 17px; }
.spread { justify-content: space-between; }
.sep { width: 1px; height: 11px; background: #ddd; }
.pick { display: grid; align-items: center; height: 13px; border: 1px solid #999; border-radius: 2px; background: #fff; }
.pick select, .pick svg { grid-area: 1 / 1; }
.pick select { appearance: none; min-width: 0; width: 100%; padding: 0 10px 0 2px; }
.pick svg { justify-self: end; margin-right: 1px; pointer-events: none; }
.wide { flex: 91; font-feature-settings: normal; }
.size { flex: 22; margin-left: -2px; }
.size select { padding-right: 8px; }
.stack > .pick { align-self: stretch; }
.letter { font-size: 9px; gap: 0; color: #444; }
.letter.small { font-size: 8px; }
.letter sup { color: #1780c9; font-size: 7px; line-height: 7px; }
.spread b, .spread em, .spread u { font-size: 8px; width: 9px; text-align: center; }
.ink { font-size: 8px; line-height: 8px; width: 9px; border-bottom: 2px solid #e81123; }
.align .row { gap: 4px; }
.sel { outline: 1px solid #777; border-radius: 2px; background: #eee; height: 13px; }
.last { width: 24px; height: 17px; justify-content: flex-start; }
.num { gap: 6px; }
.pct { font-size: 9px; }
.cells > button { align-self: stretch; }
.cells > button:not(.tight) svg:last-child { margin-left: auto; }
.cells .tight { align-self: flex-start; }
.edit .row { gap: 7px; }
.fold { display: flex; align-items: flex-end; justify-content: flex-end; padding: 4px; }
.formula { height: 24px; flex: none; display: flex; align-items: center; gap: 2px; padding: 1px 4px 0; }
.formula .pick, .fx, .entry { height: 16px; background: #fff; border: 1px solid #dde1e6; border-radius: 2px; }
.name { width: 54px; font-size: 7px; }
.dots { width: 9px; text-align: center; font-size: 9px; }
.fx { width: 45px; display: flex; align-items: center; justify-content: space-around; color: #aaa; }
.fx em { color: #222; font: italic 700 9px "Liberation Serif", serif; }
.entry { flex: 1; display: flex; align-items: center; padding-right: 2px; }
.entry input { flex: 1; min-width: 0; outline: 0; }
.work { flex: 1; min-height: 0; display: flex; background: #fff; }
.work .vbar { background: #f3f3f3; }
.sheet { flex: 1; min-width: 0; display: flex; flex-direction: column; font: 8px/8px "Liberation Sans", "Noto Sans CJK JP", sans-serif; font-feature-settings: normal; }
.sheet thead { display: block; height: 10px; }
.sheet tbody { flex: 1; min-height: 0; display: grid; grid-template-rows: repeat(36, minmax(0, 1fr)); }
.sheet tr { display: grid; grid-template-columns: 15fr repeat(18, 38fr) 9fr; min-height: 0; }
.sheet th { font-weight: 400; color: #555; background: #f1f1f1; padding: 0; text-align: center; border-right: 1px solid #d5d5d5; }
.sheet thead th { height: 10px; line-height: 9px; border-bottom: 1px solid #aaa; }
.sheet th.hot { background: #d5e4dc; color: #107c41; border-color: #107c41; }
.sheet td { padding: 0 2px; min-width: 0; white-space: nowrap; border-right: 1px solid #e2e2e2; border-bottom: 1px solid #e2e2e2; }
.sheet td.head { font-weight: 700; text-align: center; padding: 0; border-color: #555; }
.sheet td.n { text-align: right; }
.sheet td.cursor { outline: 1px solid #107c41; position: relative; z-index: 1; }
.sheets { height: 15px; flex: none; display: flex; align-items: center; padding: 0 6px 0 12px; gap: 10px; }
.leaf { font-size: 8px; height: 13px; align-self: flex-start; padding: 2px 0 0; }
.leaf:not(.on) { margin-left: 18px; }
.leaf.on { background: #fff; padding: 0 5px; margin-left: -2px; font-size: 7px; box-shadow: 0 -2px 0 #107c41 inset; }
.more { margin-left: 14px; }
.hbar { margin-left: auto; width: 38%; height: 10px; border-radius: 5px; display: flex; align-items: center; gap: 2px; padding: 0 1px; background: #f3f3f3; color: #555; }
.hbar .thumb { flex: 0 0 95%; height: 5px; }
.status { height: 13px; flex: none; display: flex; align-items: center; gap: 3px; padding: 0 9px 0 5px; background: #f3f3f3; font-size: 6px; }
.a11y { display: flex; gap: 1px; align-items: center; margin-left: 8px; }
.view { width: 19px; height: 12px; }
.view.on { background: #dcdcdc; }
.status .view + svg { margin-left: 4px; }
.status input { appearance: none; width: 51px; height: 8px; background: linear-gradient(#888, #888) center / 100% 1px no-repeat; }
.status input::-webkit-slider-thumb { appearance: none; width: 3px; height: 7px; background: #444; }
.pc { margin-left: 4px; font-size: 7px; }

.notice { position: absolute; left: 418px; top: 393px; width: 188px; padding: 15px 12px 8px; border-radius: 12px; background: #ece8e5; text-align: center; }
.notice h1 { margin: 0; font-size: 8px; line-height: 12px; font-weight: 400; }
.notice p { margin: 4px -4px 14px; font-size: 7px; line-height: 9px; white-space: nowrap; }
.notice button { width: 100%; height: 20px; border-radius: 6px; background: #26211d; color: #fff; }
.voice { position: absolute; left: 428px; top: 491px; width: 168px; padding: 4px; border-radius: 13px; background: #f6f1f1; box-shadow: 0 4px 9px #5557; }
.source { display: flex; align-items: center; gap: 4px; height: 23px; padding: 0 7px 0 8px; margin-bottom: 1px; }
.source span { flex: 1; white-space: nowrap; font-size: 6px; font-weight: 600; }
.source button { width: 25px; height: 16px; border-radius: 5px; background: #fff; box-shadow: 0 0 2px #9998; }
.tools { height: 32px; display: flex; align-items: center; justify-content: center; gap: 8px; border-radius: 11px; background: #fff; }
.tools button { width: 21px; height: 21px; }
.halo { border-radius: 11px; background: radial-gradient(circle, #c6e6fd 40%, #dff1fe 80%); box-shadow: 0 0 4px 1px #dff1fe; }
.floater { position: absolute; right: 7px; top: 378px; width: 16px; height: 16px; border-radius: 8px; background: #fff; }
.edgebar { position: absolute; right: 0; top: 402px; width: 1px; height: 10px; background: #234; }
```
FILE: sheet.js
```js
const columns = 'ABCDEFGHIJKLMNOPQR'.split('');
const values = { A1: '商品', B1: '売上合計', A2: '商品A', B2: '3814', A3: '商品B', B3: '3338', A4: '商品C', B4: '3067' };
const active = { col: 'D', row: 11 };

function cell(tag, text, name) {
  const el = document.createElement(tag);
  el.textContent = text || '';
  if (name) el.className = name;
  return el;
}

const head = document.createElement('tr');
head.append(cell('th'), ...columns.map(c => cell('th', c, c === active.col ? 'hot' : '')), cell('th'));
document.querySelector('.sheet thead').append(head);

const body = document.querySelector('.sheet tbody');
for (let r = 1; r <= 36; r++) {
  const tr = document.createElement('tr');
  tr.append(cell('th', String(r), r === active.row ? 'hot' : ''));
  for (const c of columns) {
    const value = values[c + r];
    let name = '';
    if (value && r === 1) name = 'head';
    else if (value && c === 'B') name = 'n';
    if (c === active.col && r === active.row) name = 'cursor';
    tr.append(cell('td', value, name));
  }
  tr.append(cell('td'));
  body.append(tr);
}
```
